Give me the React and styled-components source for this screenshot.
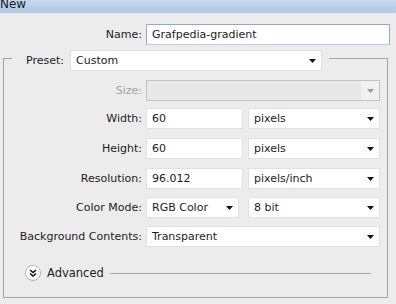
import React from "react";
import styled, { createGlobalStyle } from "styled-components";

const GlobalStyle = createGlobalStyle`
  html, body { margin: 0; padding: 0; background: #ececec; }
  body { font-family: "DejaVu Sans", "Liberation Sans", sans-serif; font-size: 11px; color: #1c1c24; }
  * { box-sizing: border-box; }
`;

const Window = styled.div`
  width: 396px;
  height: 304px;
  overflow: hidden;
  background: #ececec;
  display: flex;
  flex-direction: column;
`;

const TitleBar = styled.div`
  height: 13px;
  flex: none;
  overflow: hidden;
  background: linear-gradient(#c6d9ef, #aec8e6);
`;

const TitleText = styled.div`
  font-size: 12px;
  line-height: 12px;
  margin-top: -2px;
  color: #1a1a22;
`;

const Body = styled.div`
  padding-top: 11px;
  display: flex;
  flex-direction: column;
`;

const NameRow = styled.div`
  display: grid;
  grid-template-columns: 142px 244px;
  column-gap: 4px;
  align-items: center;
`;

const Label = styled.div`
  text-align: right;
  white-space: nowrap;
  color: ${(p) => (p.$disabled ? "#a3a3a3" : "#1c1c24")};
`;

const Field = styled.div`
  height: 21px;
  background: #fff;
  border: 1px solid ${(p) => (p.$focused ? "#86acd8" : "#e1e1e1")};
  border-bottom-color: ${(p) => (p.$focused ? "#b4cfec" : "#e1e1e1")};
  padding-left: 5px;
  display: flex;
  align-items: center;
  white-space: nowrap;
  overflow: hidden;
`;

const SelectBox = styled.div`
  height: 21px;
  background: ${(p) => (p.$disabled ? "#e8e8e8" : "#fff")};
  border: 1px solid ${(p) => (p.$disabled ? "#c2c2c2" : "#e1e1e1")};
  display: flex;
  align-items: center;
  white-space: nowrap;
  overflow: hidden;
`;

const SelectValue = styled.div`
  flex: 1;
  padding-left: 5px;
  overflow: hidden;
`;

const ArrowZone = styled.div`
  width: ${(p) => (p.$disabled ? "18px" : "14px")};
  align-self: stretch;
  display: flex;
  align-items: center;
  justify-content: flex-start;
  padding-left: ${(p) => (p.$disabled ? "6px" : "2px")};
  background: ${(p) => (p.$disabled ? "#f1f1f1" : "transparent")};
`;

const GroupBox = styled.div`
  margin: 13px 0 0 3px;
  width: 385px;
  border: 1px solid #a4a4a4;
  padding: 0 7px 16px 0;
  display: flex;
  flex-direction: column;
`;

const GroupHeader = styled.div`
  margin: -9px 0 0 8px;
  width: 317px;
  background: #ececec;
  padding: 0 7px 0 14px;
  display: flex;
  align-items: center;
  gap: 6px;
`;

const HeaderControl = styled.div`
  flex: 1;
`;

const FormRow = styled.div`
  margin-top: ${(p) => p.$top}px;
  display: grid;
  grid-template-columns: 138px 234px;
  column-gap: 4px;
  align-items: center;
`;

const Pair = styled.div`
  display: grid;
  grid-template-columns: 1fr 132px;
  column-gap: ${(p) => p.$gap}px;
`;

const AdvancedRow = styled.div`
  margin-top: 18px;
  padding-left: 21px;
  height: 16px;
  display: flex;
  align-items: center;
`;

const RoundButton = styled.div`
  width: 16px;
  height: 16px;
  border-radius: 50%;
  border: 1px solid #b4b4b4;
  background: radial-gradient(circle at 50% 35%, #ffffff 55%, #e6e6e6);
  display: flex;
  align-items: center;
  justify-content: center;
  flex: none;
`;

const AdvancedText = styled.div`
  margin-left: 6px;
  font-size: 11.5px;
  color: #1c1c24;
`;

const Rule = styled.div`
  flex: 1;
  margin: 0 9px 0 6px;
  height: 1px;
  background: #a8a8a8;
`;

function Arrow({ disabled }) {
  return (
    <svg width="7" height="4" viewBox="0 0 7 4">
      <polygon points="0,0 7,0 3.5,4" fill={disabled ? "#9a9a9a" : "#111"} />
    </svg>
  );
}

function Select({ value, disabled }) {
  return (
    <SelectBox $disabled={disabled}>
      <SelectValue>{value}</SelectValue>
      <ArrowZone $disabled={disabled}>
        <Arrow disabled={disabled} />
      </ArrowZone>
    </SelectBox>
  );
}

export default function App() {
  return (
    <>
      <GlobalStyle />
      <Window>
        <TitleBar>
          <TitleText>New</TitleText>
        </TitleBar>
        <Body>
          <NameRow>
            <Label>Name:</Label>
            <Field $focused>Grafpedia-gradient</Field>
          </NameRow>
          <GroupBox>
            <GroupHeader>
              <Label>Preset:</Label>
              <HeaderControl>
                <Select value="Custom" />
              </HeaderControl>
            </GroupHeader>
            <FormRow $top={9}>
              <Label $disabled>Size:</Label>
              <Select value="" disabled />
            </FormRow>
            <FormRow $top={7}>
              <Label>Width:</Label>
              <Pair $gap={5}>
                <Field>60</Field>
                <Select value="pixels" />
              </Pair>
            </FormRow>
            <FormRow $top={9}>
              <Label>Height:</Label>
              <Pair $gap={5}>
                <Field>60</Field>
                <Select value="pixels" />
              </Pair>
            </FormRow>
            <FormRow $top={9}>
              <Label>Resolution:</Label>
              <Pair $gap={5}>
                <Field>96.012</Field>
                <Select value="pixels/inch" />
              </Pair>
            </FormRow>
            <FormRow $top={8}>
              <Label>Color Mode:</Label>
              <Pair $gap={9}>
                <Select value="RGB Color" />
                <Select value="8 bit" />
              </Pair>
            </FormRow>
            <FormRow $top={8}>
              <Label>Background Contents:</Label>
              <Select value="Transparent" />
            </FormRow>
            <AdvancedRow>
              <RoundButton>
                <svg width="8" height="8" viewBox="0 0 8 8">
                  <polyline points="1,1 4,3.5 7,1" fill="none" stroke="#111" strokeWidth="1.6" />
                  <polyline points="1,4.5 4,7 7,4.5" fill="none" stroke="#111" strokeWidth="1.6" />
                </svg>
              </RoundButton>
              <AdvancedText>Advanced</AdvancedText>
              <Rule />
            </AdvancedRow>
          </GroupBox>
        </Body>
      </Window>
    </>
  );
}
